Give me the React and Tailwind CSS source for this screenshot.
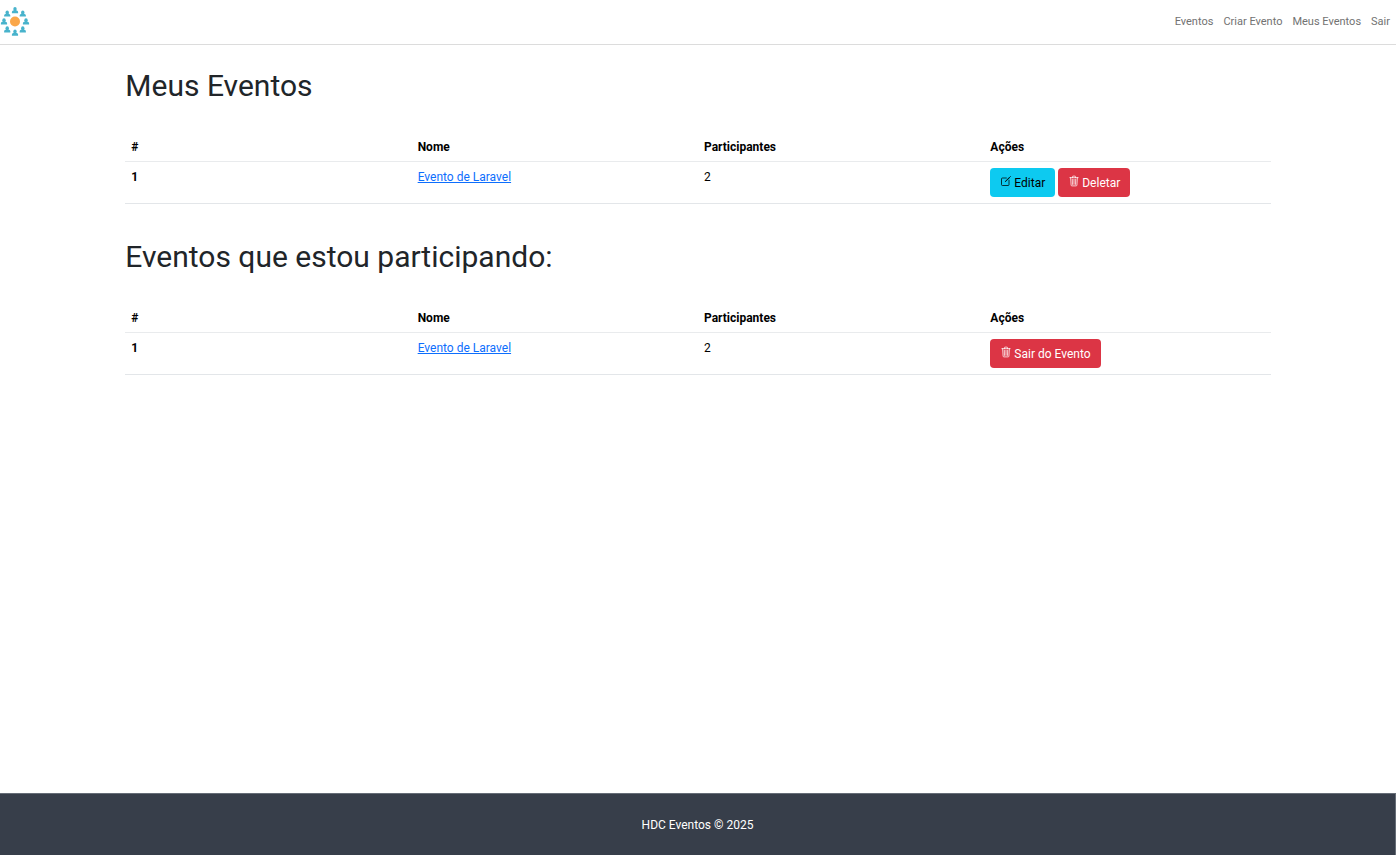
import { IoCreateOutline, IoTrashOutline } from 'react-icons/io5';

const NAV_LINKS = ['Eventos', 'Criar Evento', 'Meus Eventos', 'Sair'];
const COLUMNS = ['#', 'Nome', 'Participantes', 'Ações'];
const PERSON_ANGLES = [0, 45, 90, 135, 180, 225, 270, 315];

function Logo() {
  return (
    <svg viewBox="0 0 30 30" className="block size-[30px]" aria-hidden="true">
      <circle cx="15" cy="14.5" r="5" fill="#faa74a" />
      {PERSON_ANGLES.map((angle) => {
        const rad = (angle * Math.PI) / 180;
        const x = 15 + 11 * Math.sin(rad);
        const y = 14.5 - 11.2 * Math.cos(rad);
        return (
          <g key={angle} transform={`translate(${x} ${y})`} fill="#48b3cc">
            <ellipse cx="0" cy="-1.2" rx="1.7" ry="2" />
            <path d="M-3.1 3V1.8Q-3 .6-1.8.3L-1 0V-.6H1V0L1.8.3Q3 .6 3.1 1.8V3Z" />
          </g>
        );
      })}
    </svg>
  );
}

function ActionButton({ icon: Icon, tone, children }) {
  return (
    <button type="button" className={`inline-flex h-[29px] items-center gap-0.5 rounded px-2.5 ${tone}`}>
      <Icon className="mb-1 size-3" aria-hidden="true" />
      {children}
    </button>
  );
}

function EventSection({ title, children }) {
  return (
    <section className="mx-auto w-10/12 px-[9px]">
      <h1 className="mt-[23px] mb-7 text-[30px] leading-9 text-[#212529]">{title}</h1>
      <table className="w-full table-fixed border-collapse text-left text-black">
        <thead>
          <tr className="border-b border-[#e9ebed]">
            {COLUMNS.map((column) => (
              <th key={column} scope="col" className="px-1.5 pt-1.5 pb-[5px] font-bold">{column}</th>
            ))}
          </tr>
        </thead>
        <tbody>
          <tr className="border-b border-[#e3e6e9] align-top">
            <th scope="row" className="p-1.5 font-bold">1</th>
            <td className="p-1.5">
              <a href="#evento" className="text-[#0d6efd] underline">Evento de Laravel</a>
            </td>
            <td className="p-1.5">2</td>
            <td className="p-1.5">
              <div className="flex gap-[3px]">{children}</div>
            </td>
          </tr>
        </tbody>
      </table>
    </section>
  );
}

export default function App() {
  return (
    <div className="flex min-h-screen flex-col bg-white font-['Roboto',sans-serif] text-xs leading-[18px]">
      <header className="flex items-center justify-between border-b border-[#dcdcdc] py-[7px]">
        <a href="#inicio" aria-label="HDC Eventos">
          <Logo />
        </a>
        <nav className="flex gap-2.5 pr-1.5 text-[11px] text-[#727272]">
          {NAV_LINKS.map((label) => (
            <a key={label} href="#menu">{label}</a>
          ))}
        </nav>
      </header>

      <main className="flex grow flex-col gap-3">
        <EventSection title="Meus Eventos">
          <ActionButton icon={IoCreateOutline} tone="bg-[#0dcaf0] text-black">Editar</ActionButton>
          <ActionButton icon={IoTrashOutline} tone="bg-[#dc3545] text-white">Deletar</ActionButton>
        </EventSection>
        <EventSection title="Eventos que estou participando:">
          <ActionButton icon={IoTrashOutline} tone="bg-[#dc3545] text-white">Sair do Evento</ActionButton>
        </EventSection>
      </main>

      <footer className="border-t border-r border-[#666d77] bg-[#373e4a] pt-[22px] pb-[21px] text-center text-white">
        <p>HDC Eventos © 2025</p>
      </footer>
    </div>
  );
}
